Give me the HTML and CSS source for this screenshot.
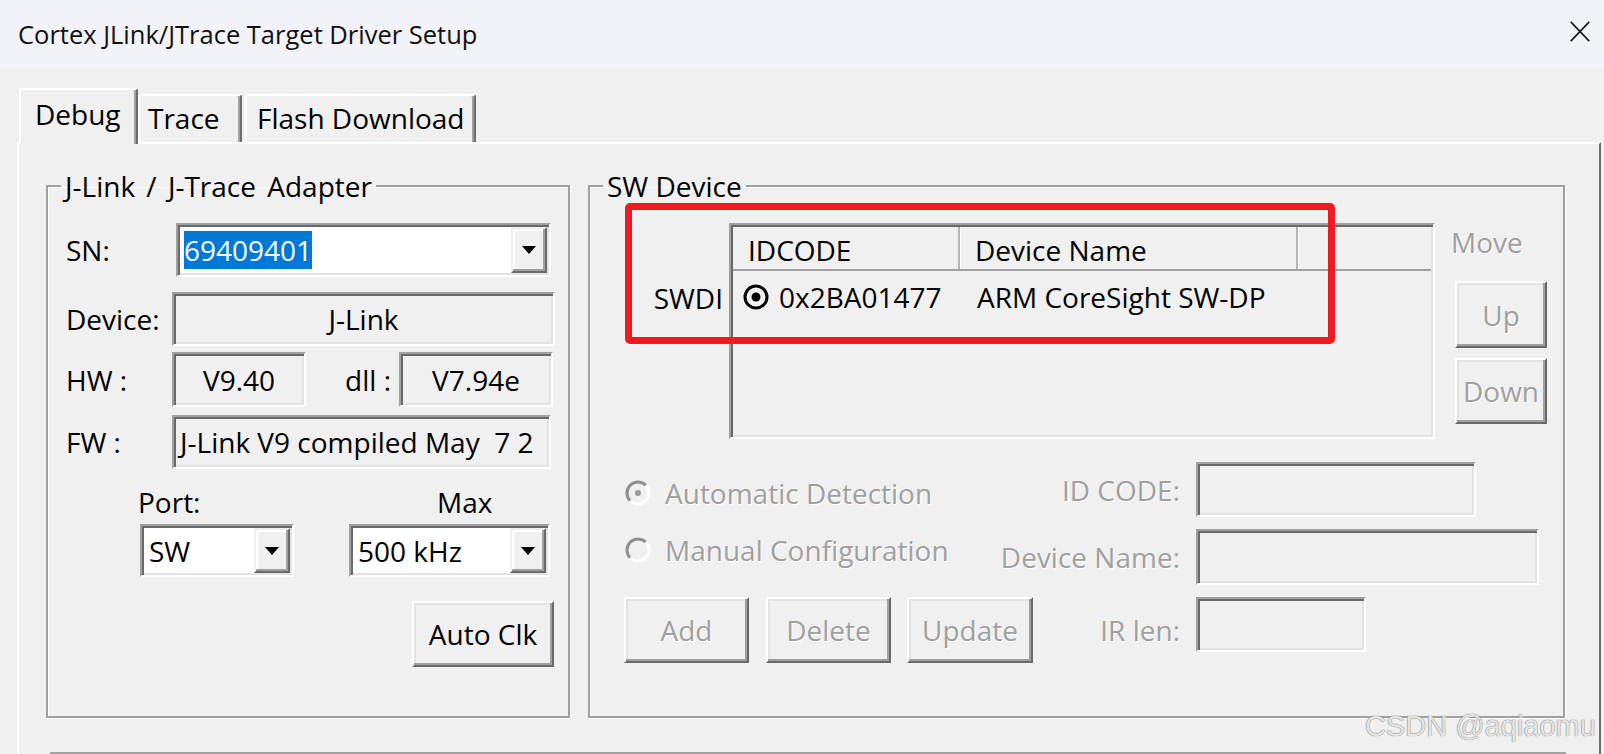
FILE: index.html
```html
<!DOCTYPE html>
<html lang="en">
<head>
<meta charset="utf-8">
<title>Cortex JLink/JTrace Target Driver Setup</title>
<link rel="stylesheet" href="styles.css">
</head>
<body>
<div class="window">
  <header class="titlebar">
    <span class="title">Cortex JLink/JTrace Target Driver Setup</span>
    <svg class="close" viewBox="0 0 20 21" width="20" height="21" aria-label="Close">
      <path d="M0.8 0.8 L19.2 20.2 M19.2 0.8 L0.8 20.2" stroke="#1b1b1b" stroke-width="1.7" fill="none"/>
    </svg>
  </header>

  <div class="tabstrip">
    <div class="tab tab-debug active">Debug</div>
    <div class="tab tab-trace">Trace</div>
    <div class="tab tab-flash">Flash Download</div>
  </div>

  <div class="panel">
    <div class="groups">
      <fieldset class="group adapter">
        <legend>J-Link / J-Trace Adapter</legend>

        <div class="frow row-sn">
          <span class="flabel">SN:</span>
          <div class="combo combo-sn sunken">
            <span class="sel">69409401</span>
            <span class="dd"><i class="arrow"></i></span>
          </div>
        </div>

        <div class="frow row-dev">
          <span class="flabel">Device:</span>
          <div class="field sunken f-device center">J-Link</div>
        </div>

        <div class="frow row-hw">
          <span class="flabel">HW :</span>
          <div class="field sunken f-hw center">V9.40</div>
          <span class="dll-label">dll :</span>
          <div class="field sunken f-dll center">V7.94e</div>
        </div>

        <div class="frow row-fw">
          <span class="flabel">FW :</span>
          <div class="field sunken f-fw">J-Link V9 compiled May  7 2</div>
        </div>

        <div class="port-grid">
          <span class="port-label">Port:</span>
          <span class="max-label">Max</span>
          <div class="combo combo-port sunken">
            <span class="ctext">SW</span>
            <span class="dd"><i class="arrow"></i></span>
          </div>
          <div class="combo combo-max sunken">
            <span class="ctext">500 kHz</span>
            <span class="dd"><i class="arrow"></i></span>
          </div>
        </div>

        <div class="auto-row">
          <div class="btn btn-autoclk">Auto Clk</div>
        </div>
      </fieldset>

      <fieldset class="group swd">
        <legend>SW Device</legend>

        <div class="swd-top">
          <div class="swdi">SWDI</div>
          <div class="listview sunken">
            <div class="lv-head">
              <div class="lv-h c1">IDCODE</div>
              <div class="lv-h c2">Device Name</div>
              <div class="lv-h c3"></div>
            </div>
            <div class="lv-row">
              <div class="lv-c c1">
                <svg class="sel-icon" viewBox="0 0 28 28" width="28" height="28">
                  <circle cx="14" cy="14" r="11" stroke="#000" stroke-width="3" fill="none"/>
                  <circle cx="14" cy="14" r="4.5" fill="#000"/>
                </svg>
                <span>0x2BA01477</span>
              </div>
              <div class="lv-c c2">ARM CoreSight SW-DP</div>
            </div>
          </div>
          <div class="move-col">
            <span class="dis move-label">Move</span>
            <div class="btn dis btn-up">Up</div>
            <div class="btn dis btn-down">Down</div>
          </div>
        </div>

        <div class="swd-bottom">
          <div class="radio r1 dis">
            <svg class="rb" viewBox="0 0 26 26" width="26" height="26">
              <path d="M5.2 20.8 A11 11 0 0 1 20.8 5.2" stroke="#8f8f8f" stroke-width="3" fill="none"/>
              <path d="M20.8 5.2 A11 11 0 0 1 5.2 20.8" stroke="#ffffff" stroke-width="3" fill="none"/>
              <circle cx="13" cy="13" r="3" fill="#9a9a9a"/>
            </svg>
            <span>Automatic Detection</span>
          </div>
          <span class="blabel dis">ID CODE:</span>
          <div class="field sunken in-id"></div>

          <div class="radio r2 dis">
            <svg class="rb" viewBox="0 0 26 26" width="26" height="26">
              <path d="M5.2 20.8 A11 11 0 0 1 20.8 5.2" stroke="#8f8f8f" stroke-width="3" fill="none"/>
              <path d="M20.8 5.2 A11 11 0 0 1 5.2 20.8" stroke="#ffffff" stroke-width="3" fill="none"/>
            </svg>
            <span>Manual Configuration</span>
          </div>
          <span class="blabel dis">Device Name:</span>
          <div class="field sunken in-name"></div>

          <div class="btnrow">
            <div class="btn dis btn-add">Add</div>
            <div class="btn dis btn-del">Delete</div>
            <div class="btn dis btn-upd">Update</div>
          </div>
          <span class="blabel dis">IR len:</span>
          <div class="field sunken in-ir"></div>
        </div>
      </fieldset>
    </div>

    <div class="group-bottom"></div>
  </div>

  <div class="annotation"></div>
  <div class="watermark">CSDN @aqiaomu</div>
</div>
</body>
</html>
```

FILE: styles.css
```css
* { box-sizing: border-box; }

html, body {
  margin: 0;
  padding: 0;
}

body {
  width: 1604px;
  height: 754px;
  overflow: hidden;
  background: #f0f0f0;
  font-family: "Open Sans", "Noto Sans", sans-serif;
  font-size: 28px;
  line-height: 34px;
  color: #000;
}

.window {
  position: relative;
  width: 1604px;
  height: 754px;
}

/* ---------- title bar ---------- */
.titlebar {
  height: 68px;
  background: #f1f3f8;
  display: flex;
  align-items: center;
  padding-left: 18px;
}

.title {
  flex: 1;
  font-size: 25.5px;
  line-height: 34px;
  color: #111;
}

.close {
  align-self: flex-start;
  margin-top: 21px;
  margin-right: 14px;
}

/* ---------- tabs ---------- */
.tabstrip {
  height: 74px;
  display: flex;
  align-items: flex-end;
  padding-left: 19px;
  position: relative;
  z-index: 2;
}

.tab {
  height: 48px;
  padding-top: 5px;
  border: 2px solid;
  border-bottom: none;
  border-color: #ffffff #6d6d6d transparent #ffffff;
  border-radius: 3px 3px 0 0;
  background: #f0f0f0;
  white-space: nowrap;
  box-shadow: inset -2px 0 0 #a0a0a0;
  flex: none;
}

.tab.active {
  height: 56px;
  margin-bottom: -2px;
  padding-top: 7px;
}

.tab-debug { width: 119px; padding-left: 14px; }
.tab-trace { width: 104px; padding-left: 8px; }
.tab-flash { width: 231px; padding-left: 10px; margin-left: 3px; }

/* ---------- tab panel ---------- */
.panel {
  margin-left: 17px;
  width: 1584px;
  height: 700px;
  border-top: 2px solid #ffffff;
  border-left: 2px solid #ffffff;
  border-right: 2px solid #6d6d6d;
  position: relative;
  z-index: 1;
}

.groups {
  display: flex;
  gap: 18px;
  padding: 25px 0 0 27px;
}

fieldset.group {
  margin: 0;
  padding: 0;
  min-width: 0;
  border: 2px solid #a0a0a0;
  box-shadow: inset 1px 1px 0 #ffffff, 1px 1px 0 #ffffff;
}

fieldset.group legend {
  margin-left: 13px;
  padding: 0 4px;
  line-height: 34px;
}

.adapter legend { word-spacing: 4px; }

.adapter {
  width: 524px;
  height: 549px;
}

.swd {
  width: 977px;
  height: 549px;
}

.group-bottom {
  margin: 34px 0 0 31px;
  width: 1516px;
  height: 60px;
  border: 2px solid #a0a0a0;
  border-bottom: none;
  box-shadow: inset 1px 1px 0 #ffffff;
}

/* ---------- 3D borders ---------- */
.sunken {
  border: 2px solid;
  border-color: #a0a0a0 #ffffff #ffffff #a0a0a0;
  box-shadow: inset 2px 2px 0 #696969, inset -2px -2px 0 #e3e3e3;
}

.btn {
  display: flex;
  align-items: center;
  justify-content: center;
  flex: none;
  background: #f0f0f0;
  border: 2px solid;
  border-color: #ffffff #696969 #696969 #ffffff;
  box-shadow: inset -2px -2px 0 #a0a0a0, inset 2px 2px 0 #e3e3e3;
  white-space: nowrap;
}

.dis {
  color: #a0a0a0;
  text-shadow: 1px 1px 0 #ffffff;
}

/* ---------- adapter group ---------- */
.frow {
  display: flex;
  align-items: center;
  padding-left: 18px;
}

.flabel {
  width: 106px;
  flex: none;
}

.field {
  display: flex;
  align-items: center;
  flex: none;
  background: #f0f0f0;
  white-space: pre;
  overflow: hidden;
}

.field.center { justify-content: center; }

.row-sn { margin-top: 20px; height: 54px; }
.row-dev { margin-top: 15px; height: 54px; }
.row-hw { margin-top: 6px; height: 55px; }
.row-fw { margin-top: 8px; height: 54px; }

.combo {
  display: flex;
  align-items: center;
  flex: none;
  background: #ffffff;
  padding: 2px;
}

.combo-sn {
  margin-left: 4px;
  width: 375px;
  height: 54px;
}

.sel {
  margin-left: 4px;
  padding: 2px 0;
  background: #0078d7;
  color: #ffffff;
  line-height: 34px;
}

.dd {
  margin-left: auto;
  align-self: stretch;
  width: 36px;
  display: flex;
  align-items: center;
  justify-content: center;
  background: #f0f0f0;
  border: 2px solid;
  border-color: #f0f0f0 #696969 #696969 #f0f0f0;
  box-shadow: inset -2px -2px 0 #a0a0a0, inset 2px 2px 0 #ffffff;
}

.arrow {
  width: 0;
  height: 0;
  border-left: 7px solid transparent;
  border-right: 7px solid transparent;
  border-top: 8px solid #000;
}

.f-device { width: 383px; height: 54px; }
.f-hw { width: 134px; height: 55px; }
.f-dll { width: 154px; height: 55px; }
.f-fw { width: 379px; height: 54px; padding-left: 6px; }

.dll-label {
  width: 93px;
  padding-right: 8px;
  text-align: right;
  flex: none;
}

.port-grid {
  display: grid;
  grid-template-columns: 211px 201px;
  padding-left: 90px;
  margin-top: 16px;
}

.max-label { margin-left: 88px; }

.combo-port {
  margin-top: 5px;
  margin-left: 2px;
  width: 154px;
  height: 53px;
}

.combo-max {
  margin-top: 5px;
  width: 201px;
  height: 53px;
}

.ctext { padding-left: 5px; }

.auto-row {
  margin-top: 24px;
  padding-left: 364px;
}

.btn-autoclk {
  width: 142px;
  height: 66px;
}

/* ---------- SW device group ---------- */
.swd-top {
  display: flex;
  align-items: flex-start;
  margin-top: 20px;
}

.swdi {
  width: 139px;
  padding-right: 6px;
  margin-top: 58px;
  text-align: right;
  flex: none;
}

.listview {
  width: 706px;
  height: 216px;
  padding: 2px;
  background: #f0f0f0;
  flex: none;
}

.lv-head {
  display: flex;
  height: 44px;
  border-bottom: 2px solid #a0a0a0;
}

.lv-h {
  padding-top: 6px;
  white-space: nowrap;
  flex: none;
}

.lv-h.c1 {
  width: 227px;
  padding-left: 15px;
  border-right: 2px solid #b4b4b4;
  box-shadow: 1px 0 0 #ffffff;
}

.lv-h.c2 {
  width: 338px;
  padding-left: 15px;
  border-right: 2px solid #b4b4b4;
  box-shadow: 1px 0 0 #ffffff;
}

.lv-h.c3 { flex: 1; }

.lv-row {
  display: flex;
  padding-top: 9px;
  white-space: nowrap;
}

.lv-c.c1 {
  width: 227px;
  padding-left: 9px;
  display: flex;
  align-items: center;
  flex: none;
}

.sel-icon { margin-right: 9px; flex: none; }

.lv-c.c2 { padding-left: 17px; }

.move-col {
  margin-left: 16px;
  display: flex;
  flex-direction: column;
  align-items: flex-start;
}

.move-label { margin-top: 2px; }

.btn-up {
  margin-top: 22px;
  margin-left: 4px;
  width: 92px;
  height: 67px;
}

.btn-down {
  margin-top: 10px;
  margin-left: 4px;
  width: 92px;
  height: 66px;
}

.swd-bottom {
  display: grid;
  grid-template-columns: 375px 181px auto;
  grid-template-rows: 55px 56px 66px;
  row-gap: 12px;
  margin-top: 23px;
  padding-left: 34px;
}

.radio {
  display: flex;
  align-items: center;
  white-space: nowrap;
  align-self: start;
}

.r1 { margin-top: 14px; }
.r2 { margin-top: 4px; }

.rb { margin-left: 1px; margin-right: 14px; flex: none; }

.blabel {
  justify-self: end;
  align-self: center;
  white-space: nowrap;
}

.in-id, .in-name, .in-ir {
  margin-left: 16px;
  align-self: start;
}

.in-id { width: 280px; height: 55px; }
.in-name { width: 343px; height: 56px; }
.in-ir { width: 170px; height: 55px; }

.btnrow {
  display: flex;
  align-items: flex-start;
}

.btn-add { width: 125px; height: 66px; }
.btn-del { width: 125px; height: 66px; margin-left: 17px; }
.btn-upd { width: 126px; height: 66px; margin-left: 16px; }

/* ---------- overlays ---------- */
.annotation {
  position: absolute;
  left: 625px;
  top: 203px;
  width: 710px;
  height: 141px;
  border: 7px solid #ed1c24;
  border-radius: 5px;
  z-index: 5;
}

.watermark {
  position: absolute;
  left: 1365px;
  top: 709px;
  font-family: "Liberation Sans", Arial, sans-serif;
  font-size: 29px;
  line-height: 34px;
  color: #e4e4e4;
  text-shadow: 0 0 1px #7a7a7a, 0 0 1px #7a7a7a, 1px 1px 0 #ffffff;
  white-space: nowrap;
  z-index: 6;
}
```
